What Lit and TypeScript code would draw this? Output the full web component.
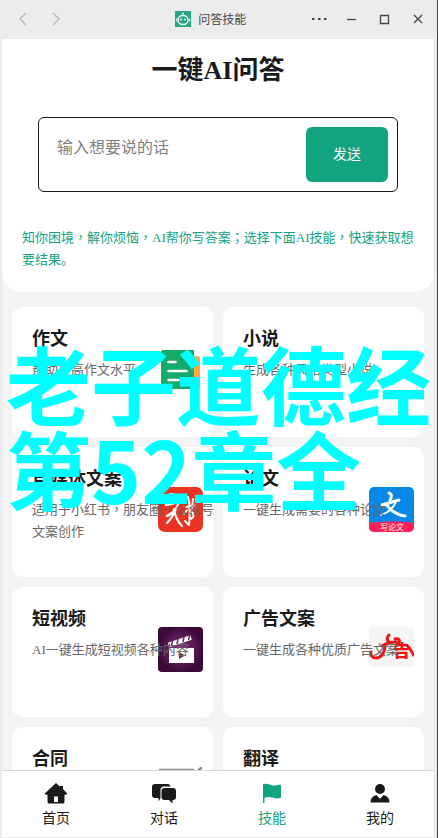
import { LitElement, html, css, svg, nothing } from "lit";
import { customElement } from "lit/decorators.js";

const essay = svg`
  <rect x="6" y="9" width="36" height="32" rx="2" fill="#ffab40"/>
  <path d="M5 3h31v39H5a2 2 0 0 1-2-2V5a2 2 0 0 1 2-2z" fill="#16ab6a"/>
  <path d="M10.500 15h7M10.500 24h18M10.500 33h10" stroke="#fff" stroke-width="2.600" stroke-linecap="round"/>`;

const media = svg`
  <rect width="45" height="45" rx="7" fill="#ea3323"/>
  <g fill="none" stroke="#fff" stroke-linecap="round" stroke-linejoin="round">
    <path d="M13 7l6 2" stroke-width="2.600"/>
    <path d="M8 18l13-3c-1 6-6 11-12 14" stroke-width="2.600"/>
    <path d="M16 23c0 4-3 9-7 13M16 22c1 7 3 12 8 17" stroke-width="2.200"/>
    <path d="M28 20l9-2M30 10c2 6 2 20 1 28l-4-4M35 12l-1 10M26 27l3-4M33 24c4 3 3 7-1 8" stroke-width="2"/>
  </g>`;

const paper = svg`
  <rect width="45" height="45" rx="5" fill="#0788e6"/>
  <path d="M0 36c12-2 33-2 45 0v4a5 5 0 0 1-5 5H5a5 5 0 0 1-5-5z" fill="#ff1f56"/>
  <path d="M20 6c3 1 3 4 1 7M13 18c6-1 11-4 17-5" fill="none" stroke="#fff" stroke-width="3" stroke-linecap="round"/>
  <path d="M27 15c-3 6-8 11-15 13" fill="none" stroke="#fff" stroke-width="1.800" stroke-linecap="round"/>
  <path d="M17 17c4 6 11 11 19 12" fill="none" stroke="#fff" stroke-width="3" stroke-linecap="round"/>
  <text x="23" y="43" text-anchor="middle" font-size="8" fill="#fff">写论文</text>`;

const video = svg`
  <defs><radialGradient id="glow"><stop offset="0" stop-color="#8c3186"/><stop offset="1" stop-color="#3b0a37"/></radialGradient></defs>
  <rect width="45" height="45" rx="4" fill="url(#glow)"/>
  <path d="M11 21h25v15H11z" fill="#fff"/>
  <path d="M10.500 18L33 10.500" stroke="#fff" stroke-width="5"/>
  <path d="M13.500 19l1-5M19 17l1-5M25 15l1-5M30.500 13l1-5" stroke="#6b2467" stroke-width="1.500"/>
  <path d="M21 25v7l6-3.500z" fill="#6b2467"/>`;

const advert = svg`
  <rect width="45" height="40" rx="4" fill="#f5f5f5"/>
  <path d="M20 8c-3 3-2 6 1 8M13 19c5-3 8-4 14-4M16 18c0 8-4 13-9 13-4 0-6-3-5-6M26 12c4-1 5 1 4 4" fill="none" stroke="#f01515" stroke-width="3" stroke-linecap="round"/>
  <text x="24" y="30" font-size="17" font-weight="900" fill="#f01515">告</text>
  <path d="M37 18c4 2 5 6 8 11" fill="none" stroke="#f01515" stroke-width="2.800"/>`;

const contract = svg`
  <path d="M2 3h33M41 3l2-2" stroke="#8b8b93" stroke-width="2.500" stroke-linecap="round"/>
  <path d="M2 3v36h32V3" fill="none" stroke="#8b8b93" stroke-width="2"/>`;

const skills = [
  { title: "作文", text: "帮助提高作文水平", icon: essay },
  { title: "小说", text: "生成各种风格类型小说", icon: null },
  { title: "自媒体文案", text: "适用于小红书，朋友圈，公众号文案创作", icon: media },
  { title: "论文", text: "一键生成需要的各种论文", icon: paper },
  { title: "短视频", text: "AI一键生成短视频各种内容", icon: video },
  { title: "广告文案", text: "一键生成各种优质广告文案", icon: advert },
  { title: "合同", text: "", icon: contract },
  { title: "翻译", text: "", icon: null },
];

const tabs = [
  { label: "首页", icon: svg`<path fill-rule="evenodd" d="M12 1L.8 11.500l1 1.200H3.500V20a1.500 1.500 0 0 0 1.500 1.500h14a1.500 1.500 0 0 0 1.500-1.500v-7.300h1.700l1-1.200L19 7V4h-3v.8zM10 14.500h4V20h-4z"/>` },
  { label: "对话", icon: svg`<path d="M3 2h13a3 3 0 0 1 2.700 2.500H12A3.500 3.500 0 0 0 8.500 8v8l-2 3.500V16H3a3 3 0 0 1-3-3V5a3 3 0 0 1 3-3z"/><path d="M12.500 6H21a3 3 0 0 1 3 3v6a3 3 0 0 1-3 3h-.5v3.500L17 18h-4.500a3 3 0 0 1-3-3V9a3 3 0 0 1 3-3z"/>` },
  { label: "技能", icon: svg`<path d="M3 2h1.500c4-.8 6 1.800 9 1.500 3-.2 5-1.500 7.500-.5v12.500c-3 2-6 .5-9 0-3-.6-5-.8-7.500.5v5H3z"/>`, on: true },
  { label: "我的", icon: svg`<circle cx="12" cy="7" r="5"/><path d="M2.500 20.500c0-4 2-6.500 6-7.500L12 17l3.500-4c4 1 6 3.500 6 7.500z"/>` },
];

/** Commas and semicolons sit in the middle of their cell. */
const punctuate = (text: string) =>
  text.split(/([，；])/).map((part) => (/[，；]/.test(part) ? html`<span class="mark">${part}</span>` : part));

@customElement("app-root")
export class AppRoot extends LitElement {
  static styles = css`
    :host {
      display: block;
      height: 100vh;
      position: relative;
      overflow: hidden;
      box-sizing: border-box;
      background: #ececec;
      border-right: 1px solid #444;
      color: #1a1a1a;
      font-family: "Liberation Serif", "Noto Sans CJK SC", sans-serif;
    }
    * { box-sizing: border-box; }
    button { font-family: "Noto Sans CJK SC", sans-serif; border: 0; padding: 0; background: none; color: inherit; }
    .window { height: 100%; display: flex; flex-direction: column; padding: 0 3px 1px 2px; }
    .bar { flex: none; height: 39px; display: grid; grid-template-columns: 15fr auto 17fr; align-items: center; padding: 0 5px 2px 12px; }
    .group { display: flex; gap: 11px; }
    .end { justify-content: flex-end; }
    .group button { width: 22px; height: 22px; }
    .group svg { display: block; width: 22px; height: 22px; fill: none; stroke: #444; stroke-width: 1.3; }
    .back svg { stroke: #b5b5b5; }
    .name { display: flex; align-items: center; gap: 7px; font-family: "Noto Sans CJK SC", sans-serif; font-size: 12px; line-height: 20px; color: #444; }
    .name svg { width: 16px; height: 16px; }
    .page { flex: 1; min-height: 0; overflow: hidden; background: #f4f4f4; }
    .hero { background: #fff; border-radius: 0 0 20px 20px; padding: 13px 20px 21px; }
    h1 { margin: 0; font-size: 26px; line-height: 38px; text-align: center; }
    .ask { display: flex; margin: 27px 16px 35px; padding: 9px; border: 1px solid #1a1a1a; border-radius: 6px; }
    .ask textarea { flex: 1; min-width: 0; height: 55px; padding: 9px; border: 0; outline: 0; resize: none; background: none; font-family: inherit; font-size: 16px; line-height: 24px; color: #1a1a1a; }
    .ask textarea::placeholder { color: #808080; }
    .ask button { width: 82px; height: 55px; padding-bottom: 4px; border-radius: 6px; background: #12a37f; color: #fff; font-size: 14px; line-height: 20px; }
    .hint { margin: 0; font-size: 13px; line-height: 22px; color: #12a37f; }
    .mark { font-family: "Noto Sans CJK TC", sans-serif; line-height: 1; }
    .cards { display: grid; grid-template-columns: 1fr 1fr; gap: 10px; padding: 15px 10px; }
    .card { position: relative; height: 130px; padding: 19px 0 0 20px; border-radius: 10px; background: #fff; }
    .card h2 { margin: 0 0 6px; font-size: 18px; line-height: 27px; }
    .card p { position: relative; margin: 0 -2px 0 0; font-size: 13px; line-height: 22px; color: #666; }
    .pic { position: absolute; top: 40px; right: 10px; width: 45px; height: 45px; font-family: "Noto Sans CJK SC", sans-serif; }
    nav { flex: none; display: grid; grid-template-columns: repeat(4, 1fr); height: 67px; border-top: 1px solid #d8d8d8; background: #fff; }
    nav a { display: flex; flex-direction: column; align-items: center; padding-top: 11px; gap: 3px; font-size: 14px; line-height: 20px; color: #1a1a1a; text-decoration: none; }
    nav a.on { color: #12a37f; }
    nav svg { width: 24px; height: 24px; fill: currentColor; }
    .banner { position: absolute; top: 339px; left: 6px; right: 0; margin: 0; font-family: "Noto Sans CJK SC", sans-serif; font-weight: 700; font-size: 85px; line-height: 85px; color: #0ff; white-space: nowrap; pointer-events: none; }
  `;

  render() {
    return html`
      <div class="window">
        <header class="bar">
          <div class="group back">
            <button aria-label="后退"><svg viewBox="0 0 22 22"><path d="M12 5l-6 6 6 6"/></svg></button>
            <button aria-label="前进"><svg viewBox="0 0 22 22"><path d="M6 5l6 6-6 6"/></svg></button>
          </div>
          <div class="name">
            <svg viewBox="0 0 16 16">
              <rect width="16" height="16" fill="#2aa581"/>
              <circle cx="8" cy="2.500" r="1" fill="#fff"/>
              <rect x="3" y="4.500" width="10" height="9" rx="4.500" fill="none" stroke="#fff" stroke-width="1.300"/>
              <path d="M1.800 7.500v3M14.200 7.500v3" stroke="#fff"/>
              <circle cx="6" cy="8.500" r="1" fill="#fff"/><circle cx="10" cy="8.500" r="1" fill="#fff"/>
            </svg>
            <span>问答技能</span>
          </div>
          <div class="group end">
            <button aria-label="更多"><svg viewBox="0 0 22 22"><path d="M4 11h2.500M10 11h2.500M16 11h2.500" stroke-width="2.200"/></svg></button>
            <button aria-label="最小化"><svg viewBox="0 0 22 22"><path d="M6 11.500h9"/></svg></button>
            <button aria-label="最大化"><svg viewBox="0 0 22 22"><path d="M6.500 7.500h8v8h-8z"/></svg></button>
            <button aria-label="关闭"><svg viewBox="0 0 22 22"><path d="M7 7l8 8M15 7l-8 8"/></svg></button>
          </div>
        </header>
        <main class="page">
          <section class="hero">
            <h1>一键AI问答</h1>
            <div class="ask">
              <textarea aria-label="问题" placeholder="输入想要说的话"></textarea>
              <button>发送</button>
            </div>
            <p class="hint">${punctuate("知你困境，解你烦恼，AI帮你写答案；选择下面AI技能，快速获取想要结果。")}</p>
          </section>
          <section class="cards">
            ${skills.map((s) => html`
              <article class="card">
                ${s.icon ? html`<svg class="pic" viewBox="0 0 45 45">${s.icon}</svg>` : nothing}
                <h2>${s.title}</h2>
                ${s.text ? html`<p>${punctuate(s.text)}</p>` : nothing}
              </article>`)}
          </section>
        </main>
        <nav>
          ${tabs.map((t) => html`<a href="#" class=${t.on ? "on" : ""}><svg viewBox="0 0 24 24">${t.icon}</svg>${t.label}</a>`)}
        </nav>
      </div>
      <p class="banner">老子道德经<br>第52章全</p>
    `;
  }
}
